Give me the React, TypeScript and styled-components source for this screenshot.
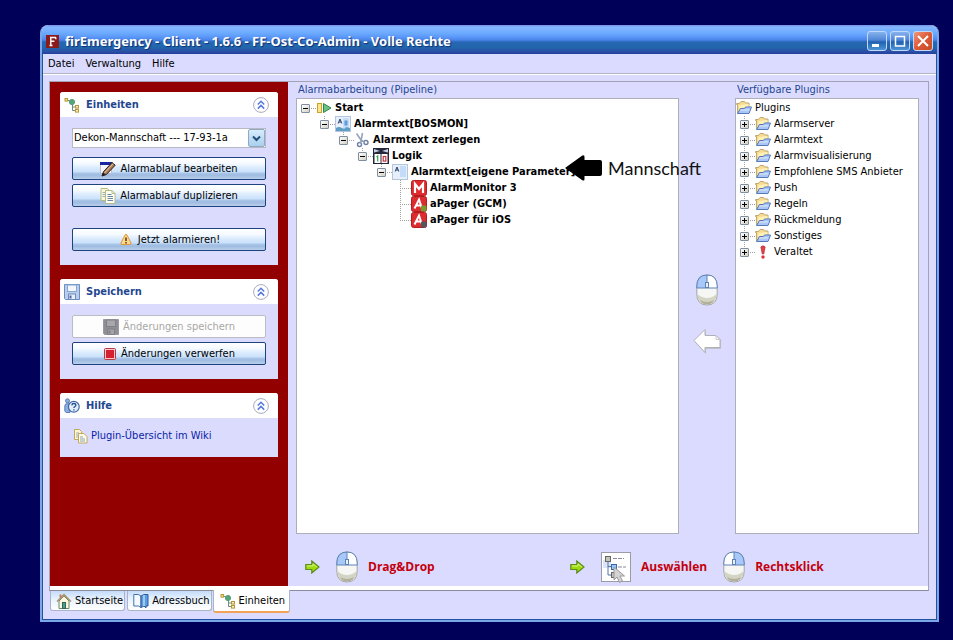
import React from "react";
import styled, { createGlobalStyle, css } from "styled-components";

const GlobalStyle = createGlobalStyle`
  *, *::before, *::after { box-sizing: border-box; }
  body { margin: 0; background: #000058; }
  body, button, select {
    font-family: "DejaVu Sans Condensed", "DejaVu Sans", sans-serif;
    font-size: 11px;
    line-height: 16px;
    color: #000;
  }
  svg { display: block; flex: none; }
`;

/* ---------- window frame ---------- */

const Desktop = styled.div`
  display: flex;
  min-height: 100vh;
  padding: 25px 14px 18px 40px;
`;

const Window = styled.div`
  flex: 1;
  display: flex;
  flex-direction: column;
  min-width: 0;
  border: 2px solid #7ba6e8;
  border-top: 0;
  border-radius: 8px 8px 0 0;
  background: #dbdbff;
`;

const TitleBar = styled.header`
  display: flex;
  align-items: center;
  gap: 6px;
  height: 29px;
  padding: 3px 4px 0 4px;
  border-radius: 7px 7px 0 0;
  background: linear-gradient(#6f8fe0 0, #86b6ff 2px, #6cabff 8px, #5a97f8 12px, #4a86ea 15px, #2766b4 17px, #2168ac 22px, #2a52a8 26px, #24409c 100%);
`;

const AppTitle = styled.h1`
  flex: 1;
  margin: 0;
  font: bold 13px/18px "Noto Sans", sans-serif;
  color: #fff;
  text-shadow: 1px 1px 1px #0c2f74;
  white-space: nowrap;
`;

const Caption = styled.div`
  display: flex;
  gap: 3px;
`;

const CaptionButton = styled.button<{ $close?: boolean }>`
  width: 20px;
  height: 20px;
  padding: 0;
  border: 1px solid #c3d8f8;
  border-radius: 3px;
  background: ${(p) =>
    p.$close
      ? "linear-gradient(135deg, #f0957a, #dc5a38 50%, #c84a26)"
      : "linear-gradient(#86b2ee, #4f86d4 45%, #2261b0 55%, #4a94d4)"};
`;

const Body = styled.div`
  flex: 1;
  display: flex;
  flex-direction: column;
  border: 1px solid #1f559f;
  border-top: 0;
`;

const MenuBar = styled.nav`
  display: flex;
  gap: 11px;
  padding: 2px 5px 1px;
  border-bottom: 1px solid #b4b4c4;
  box-shadow: 0 1px 0 #fff;
`;

const MenuItem = styled.button`
  padding: 0;
  border: 0;
  background: none;
`;

/* ---------- tab pane ---------- */

const Pane = styled.main`
  flex: 1;
  display: flex;
  margin: 7px 7px 0 6px;
  border: 1px solid #a3a3b4;
  border-bottom-color: #8c8c9c;
  box-shadow: inset 0 -4px 0 #fff;
  padding-bottom: 4px;
`;

const Sidebar = styled.aside`
  flex: 0 0 238px;
  display: flex;
  flex-direction: column;
  gap: 14px;
  padding: 10px;
  background: #920000;
`;

const CardBox = styled.section`
  border-radius: 3px 3px 0 0;
  background: #dbdbfe;
`;

const CardHead = styled.header`
  display: flex;
  align-items: center;
  gap: 6px;
  height: 25px;
  padding: 0 8px 0 4px;
  border-radius: 3px 3px 0 0;
  background: #fff;
`;

const CardTitle = styled.h2`
  flex: 1;
  margin: 0;
  font-size: 11px;
  color: #1f4790;
`;

const CollapseButton = styled.button`
  width: 18px;
  height: 18px;
  padding: 0;
  border: 0;
  background: none;
`;

const CardBody = styled.div<{ $compact?: boolean }>`
  display: flex;
  flex-direction: column;
  gap: 4px;
  padding: ${(p) => (p.$compact ? "10px 12px 13px" : "11px 12px 14px")};
`;

const SelectBox = styled.label`
  display: grid;
  grid-template-columns: 1fr 17px;
  align-items: center;
  height: 20px;
  margin-bottom: 5px;
  border: 1px solid #b9b9c4;
  background: #fff;
`;

const Select = styled.select`
  grid-area: 1 / 1 / 2 / 3;
  appearance: none;
  width: 100%;
  height: 18px;
  padding: 0 18px 0 1px;
  border: 0;
  background: none;
  line-height: 18px;
`;

const SelectArrow = styled.span`
  grid-area: 1 / 2;
  display: grid;
  place-items: center;
  height: 18px;
  border: 1px solid #8fa9c4;
  border-radius: 2px;
  background: linear-gradient(#d8ecfc, #a9cfee);
  pointer-events: none;
`;

const ActionButton = styled.button<{ $spaced?: boolean }>`
  display: flex;
  align-items: center;
  justify-content: center;
  gap: 4px;
  height: 23px;
  padding: 0;
  border: 1px solid #1d437e;
  border-radius: 2px;
  background: linear-gradient(#fff 0, #f6faff 25%, #d9eafd 48%, #cbe2fb 66%, #a9c6ea 72%, #9fbbe0 82%, #b9cfea 100%);
  ${(p) => p.$spaced && css`margin-top: 17px;`}
  &:disabled {
    border-color: #bcbcc4;
    background: #fdfdfe;
    color: #a8a8a4;
  }
`;

const WikiLink = styled.a`
  display: flex;
  align-items: center;
  gap: 3px;
  padding-left: 2px;
  color: #0a1ea8;
  text-decoration: none;
`;

/* ---------- editor ---------- */

const Editor = styled.div`
  flex: 1;
  display: flex;
  flex-direction: column;
  min-width: 0;
`;

const Columns = styled.div`
  flex: 1;
  display: flex;
  padding: 0 9px 0 8px;
`;

const Column = styled.section<{ $narrow?: boolean }>`
  flex: ${(p) => (p.$narrow ? "0 0 184px" : "1")};
  display: flex;
  flex-direction: column;
  min-width: 0;
`;

const ColumnTitle = styled.h2`
  margin: 0;
  padding-left: 2px;
  font-size: 11px;
  font-weight: normal;
  color: #1f4790;
`;

const TreeBox = styled.div`
  position: relative;
  flex: 1;
  border: 1px solid #aeaeb8;
  background: #fff;
`;

const TreeList = styled.ul`
  list-style: none;
  margin: 0;
  padding: 1px 0 0;
`;

const MoveColumn = styled.div`
  flex: 0 0 56px;
  display: flex;
  flex-direction: column;
  align-items: center;
  justify-content: center;
  gap: 22px;
  padding-top: 12px;
`;

const IconButton = styled.button`
  padding: 0;
  border: 0;
  background: none;
`;

const Row = styled.li<{ $level: number; $bold?: boolean }>`
  display: flex;
  align-items: center;
  height: 16px;
  padding-left: ${(p) => 4 + p.$level * 19}px;
  font-weight: ${(p) => (p.$bold ? "bold" : "normal")};
  white-space: nowrap;
`;

const RootRow = styled.li`
  display: flex;
  align-items: center;
  height: 16px;
  white-space: nowrap;
`;

const RowText = styled.span`
  padding-left: 3px;
`;

type Rail = "none" | "up" | "through";

const railHeight = { none: "0", up: "8px", through: "16px" };

const Joint = styled.span<{ $rail: Rail }>`
  flex: none;
  display: flex;
  align-items: center;
  width: 15px;
  height: 16px;
  background:
    repeating-linear-gradient(90deg, #a0a0a0 0 1px, transparent 1px 2px) 4px 8px / 11px 1px no-repeat,
    repeating-linear-gradient(#a0a0a0 0 1px, transparent 1px 2px) 4px 0 / 1px ${(p) => railHeight[p.$rail]} no-repeat;
`;

const Toggle = styled.button<{ $open?: boolean }>`
  width: 9px;
  height: 9px;
  padding: 0;
  border: 1px solid #7f8f9f;
  border-radius: 1px;
  background:
    linear-gradient(#000, #000) center / 5px 1px no-repeat,
    linear-gradient(#000, #000) center / 1px ${(p) => (p.$open ? "1px" : "5px")} no-repeat,
    linear-gradient(135deg, #fff, #d4d0c4);
`;

const Note = styled.div`
  position: absolute;
  left: 268px;
  top: 56px;
  display: flex;
  align-items: center;
  gap: 6px;
  font: 18px/26px Lato, sans-serif;
  color: #111;
`;

const Footer = styled.footer`
  display: flex;
  height: 52px;
  padding: 13px 17px 0;
`;

const Hint = styled.div<{ $first?: boolean }>`
  ${(p) => p.$first && css`flex: 0 0 265px;`}
  display: flex;
  align-items: center;
  gap: 16px;
  height: 40px;
`;

const HintStep = styled.div`
  display: flex;
  align-items: center;
  gap: 10px;
`;

const HintText = styled.span`
  font: bold 12px/16px "Open Sans", sans-serif;
  color: #c4000c;
`;

/* ---------- tabs ---------- */

const Tabs = styled.div`
  display: flex;
  align-items: flex-start;
  gap: 2px;
  height: 28px;
  padding-left: 7px;
`;

const Tab = styled.button<{ $active?: boolean }>`
  display: flex;
  align-items: center;
  gap: 3px;
  height: 20px;
  padding: 0 1px 0 5px;
  border: 1px solid #a9b4c8;
  border-top: 0;
  border-radius: 0 0 3px 3px;
  background: linear-gradient(#c3dbfb, #e6f1fd 40%, #fff);
  white-space: nowrap;
  ${(p) =>
    p.$active &&
    css`
      height: 23px;
      margin: -1px 0 0 -1px;
      padding: 0 4px 0 6px;
      border-bottom: 2px solid #f3a255;
      background: #fff;
    `}
`;

/* ---------- icons ---------- */

const FireLogo = () => (
  <svg width="13" height="13" viewBox="0 0 13 13">
    <rect width="13" height="13" fill="#8c1a1a" />
    <path d="M4 2.5h6M4.8 2.5v8M3.5 10.5h3M4.8 6.3h3.6M9.8 2.5v1.8" stroke="#fff" strokeWidth="1.4" fill="none" />
  </svg>
);

const UnitsIcon = () => (
  <svg width="16" height="16" viewBox="0 0 16 16" fill="none">
    <path d="M3 3.5h3M8.5 7v6.5h3M8.5 10h3" stroke="#6d8a8a" />
    <rect x="1" y="1.5" width="2.6" height="2.6" fill="#f6e08a" stroke="#b8963a" />
    <circle cx="8" cy="5" r="2.6" fill="#52a874" stroke="#5c9c80" />
    <rect x="11.5" y="8.5" width="3" height="2.6" fill="#fbf0b0" stroke="#b8963a" />
    <rect x="11.5" y="12.5" width="3" height="2.6" fill="#fbf0b0" stroke="#b8963a" />
  </svg>
);

const SaveIcon = ({ gray }: { gray?: boolean }) => (
  <svg width="16" height="16" viewBox="0 0 16 16">
    <path d="M.5.5h15v15h-14l-1-1z" fill={gray ? "#8e8e94" : "#b9cdec"} stroke={gray ? "#9a9aa0" : "#6d8cc0"} />
    <rect x="3.5" y="1" width="9" height="6.5" fill={gray ? "#a8a8ac" : "#f2f7fe"} stroke={gray ? "#808086" : "#8ba5d0"} />
    <rect x="4.5" y="10" width="7" height="5.5" fill={gray ? "#a2a2a8" : "#e9eff9"} stroke={gray ? "#808086" : "#6d8cc0"} />
    <rect x="5.5" y="11.5" width="2" height="3" fill={gray ? "#808086" : "#4b6aa4"} />
  </svg>
);

const HelpIcon = () => (
  <svg width="16" height="16" viewBox="0 0 16 16" fill="none">
    <circle cx="3.5" cy="2.8" r="2" fill="#8eaede" stroke="#5f80b8" />
    <path d="M.8 13V8q0-2.5 2.5-2.5L6 6v8.5H2z" fill="#8eaede" stroke="#5f80b8" />
    <circle cx="9.8" cy="8.8" r="5.4" fill="#e4effc" stroke="#4169a8" strokeWidth="1.2" />
    <path d="M7.8 7.4q.2-1.9 2.1-1.9t2 1.6q0 1-1.2 1.7-.8.5-.8 1.3M9.9 11.2v1.2" stroke="#24508f" strokeWidth="1.3" />
  </svg>
);

const CollapseIcon = () => (
  <svg width="18" height="18" viewBox="0 0 18 18" fill="none">
    <circle cx="9" cy="9" r="7.4" fill="#fff" stroke="#a9abc0" />
    <path d="M5.8 8.5 9 5.3l3.2 3.2M5.8 12.6 9 9.4l3.2 3.2" stroke="#5577dc" strokeWidth="1.5" />
  </svg>
);

const EditIcon = () => (
  <svg width="16" height="16" viewBox="0 0 16 16">
    <path d="M.5 1.500h11v11H.5z" fill="#f4f4fa" stroke="#b8bccc" />
    <rect y="1" width="12" height="3" fill="#1626a0" />
    <path d="M2 15l1.400-4.200L12 1.500l3.200 2.700-8.800 9.300z" fill="#a67c5c" stroke="#2c1e18" />
    <path d="M4.500 12l8.700-9.300" stroke="#e4c3a0" />
    <path d="M2 15l1.200-3.400 2.400 2z" fill="#222" />
  </svg>
);

const CopyIcon = () => (
  <svg width="16" height="16" viewBox="0 0 16 16">
    <path d="M1 .5h6.500l1.500 2v10H1z" fill="#fbf8d8" stroke="#b4bc84" />
    <path d="M2.500 4.500h3M2.500 6.500h3M2.500 8.500h3" stroke="#9ab0c4" />
    <path d="M5.500 2.500H12l3 3v10H5.500z" fill="#fffef2" stroke="#b4bc84" />
    <path d="M12 2.500v3h3" fill="none" stroke="#b4bc84" />
    <path d="M7.500 6.500h4M7.500 8.500h5.500M7.500 10.500h5.500M7.500 12.500h5.500" stroke="#6c86a4" />
  </svg>
);

const WikiIcon = () => (
  <svg width="14" height="16" viewBox="0 0 14 16">
    <path d="M.5 1.500h5l2 2v8h-7z" fill="#fff8d0" stroke="#c0a860" />
    <path d="M2 5h3M2 7h3M2 9h3" stroke="#9ab0c4" />
    <path d="M4.500 5.500h5.500l3 3v6.500h-8.500z" fill="#fffbe4" stroke="#c0a860" />
    <path d="M6 9h3M6 11h5M6 13h5" stroke="#8ea4ba" />
  </svg>
);

const WarnIcon = () => (
  <svg width="16" height="16" viewBox="0 0 16 16">
    <path d="M7 3q1-1.500 2 0l4 8q.5 1.500-1 1.500H4q-1.500 0-1-1.500z" fill="#fdd890" stroke="#e0983c" />
    <path d="M8 5.500v3.500M8 10v1.500" stroke="#5a3000" strokeWidth="1.500" />
  </svg>
);

const StopIcon = () => (
  <svg width="14" height="12" viewBox="0 0 14 12">
    <rect x="1.500" y=".5" width="11" height="11" rx="1" fill="#f8c8cc" stroke="#b83840" />
    <rect x="3" y="2" width="8" height="8" fill="#d42030" />
  </svg>
);

const StartIcon = () => (
  <svg width="16" height="16" viewBox="0 0 16 16">
    <rect x="1.500" y="3.500" width="4" height="9" fill="#fbe58a" stroke="#c9a227" />
    <path d="M7.500 3.500 15 8l-7.500 4.500z" fill="#6cc080" stroke="#2e8b4f" />
  </svg>
);

const TextIcon = ({ wave }: { wave?: boolean }) => (
  <svg width="16" height="16" viewBox="0 0 16 16">
    <rect x=".5" y=".5" width="15" height="15" fill="#e6effa" stroke="#b4c6de" />
    <path d="M8 2h6v11H8z" fill="#c5dcf8" />
    <path d="M3.200 7.500 5 3l1.800 4.500M3.800 6h2.500" fill="none" stroke="#2c4470" />
    {wave && <path d="M1 12q3-2 6 0t4-1l4 1v3H1z" fill="#5f9ec4" />}
    {wave && <path d="M9.500 4.500h3v5h-3z" fill="#5b9bd6" />}
  </svg>
);

const CutIcon = () => (
  <svg width="16" height="16" viewBox="0 0 16 16" fill="none">
    <path d="M2.500 1.500 8 9.500M8.500 1 7 9" stroke="#98a4ba" strokeWidth="1.600" />
    <circle cx="5.500" cy="12.500" r="2" stroke="#6f80a4" strokeWidth="1.400" />
    <circle cx="12" cy="10.500" r="2" stroke="#6f80a4" strokeWidth="1.400" />
    <path d="M6 11l1.500-2.500 3 1.500" stroke="#8e9cb4" strokeWidth="1.400" />
  </svg>
);

const LogicIcon = () => (
  <svg width="16" height="16" viewBox="0 0 16 16">
    <rect width="16" height="16" fill="#26263a" />
    <path d="M1 1l6 2-6 1.500zM15 1l-6 2 6 1.500z" fill="#c8d0e8" />
    <rect x="1.500" y="6" width="6" height="9" fill="#fff" />
    <rect x="8.500" y="6" width="6" height="9" fill="#fff" />
    <path d="M3.500 9l1.200-1v5.500" fill="none" stroke="#3aa04a" strokeWidth="1.200" />
    <rect x="10.200" y="8.500" width="2.600" height="4.600" fill="none" stroke="#c8303c" strokeWidth="1.200" />
  </svg>
);

const MonitorIcon = () => (
  <svg width="16" height="16" viewBox="0 0 16 16">
    <rect x=".5" y=".5" width="15" height="15" rx="2" fill="#e02a2e" stroke="#b41c20" />
    <path d="M4 13V4l4 5 4-5v9" fill="none" stroke="#fff" strokeWidth="2.200" />
  </svg>
);

const PagerIcon = ({ badge }: { badge: string }) => (
  <svg width="16" height="16" viewBox="0 0 16 16">
    <rect x=".5" y=".5" width="15" height="15" rx="2" fill="#dc2c30" stroke="#b41c20" />
    <path d="M3.500 12.500 8 3.500l3 9M5.500 9.500h5" fill="none" stroke="#fff" strokeWidth="2" />
    <rect x="10" y="9.500" width="5.500" height="6" rx="1" fill={badge} />
  </svg>
);

const FolderIcon = () => (
  <svg width="16" height="16" viewBox="0 0 16 16">
    <path d="M1.500 13V4.500H.5v-1h3l1.500-2h3.500l1 1.500H13v4" fill="#f8dc8c" stroke="#c0a878" />
    <path d="M3.500 5 12.500 4v4H3z" fill="#fff0b8" />
    <path d="M1.500 13.500l3-5h4l1-1.500h6l-2.500 6.500z" fill="#a9c6f6" stroke="#5478bc" />
    <path d="M4.500 10h9" stroke="#dceafe" />
  </svg>
);

const AlertIcon = () => (
  <svg width="16" height="16" viewBox="0 0 16 16">
    <path d="M5.800 3q2.200-2.500 4.400 0L8.800 10H7.200z" fill="#e04048" stroke="#b82c34" strokeWidth=".6" />
    <circle cx="8" cy="13" r="1.700" fill="#d8343c" />
  </svg>
);

const MouseIcon = ({ right }: { right?: boolean }) => (
  <svg width="22" height="32" viewBox="0 0 22 32">
    <path d="M.8 12Q1 1 11 1t10.200 11v8q0 11-10.200 11T.8 20z" fill="#f6f6f4" stroke="#a4a4a8" />
    <path d="M1.500 20q4 4 9.500 4t9.500-4q0 10.500-9.500 10.500T1.500 20z" fill="#d4d4c4" />
    <path d="M4 26q3 2 7 2t7-2q-2 4.500-7 4.500T4 26z" fill="#b0b09c" />
    <path d="M.8 14V12Q1 1 11 1v13z" fill={right ? "#fff" : "#a9c8fa"} />
    <path d="M21.200 14V12Q21 1 11 1v13z" fill={right ? "#a9c8fa" : "#fff"} />
    <path d="M.8 14V12Q1 1 11 1t10.200 11v2zM11 1v13" fill="none" stroke="#5c82b4" />
    <rect x="9.500" y="8.500" width="3" height="5" fill="#e8f0fc" stroke="#5c82b4" />
  </svg>
);

const BackIcon = () => (
  <svg width="28" height="26" viewBox="0 0 28 26">
    <path d="M2 14 13 3v5h11l4 4v9H13v5z" fill="#c0c0c8" />
    <path d="M1 12.500 12 1.500v6h11l4 4v8H12v5z" fill="#fff" stroke="#b0b0b8" />
    <path d="M23 7.500v4h4" fill="none" stroke="#c8c8cc" />
  </svg>
);

const GoIcon = () => (
  <svg width="15" height="14" viewBox="0 0 15 14">
    <path d="M.8 4.500h6V1l7.200 6-7.200 6V9.500h-6z" fill="#9edc10" stroke="#5c8a1c" strokeWidth="1.200" />
    <path d="M2 6h6V4l4 3" fill="none" stroke="#d4f47c" />
  </svg>
);

const PickIcon = () => (
  <svg width="30" height="32" viewBox="0 0 30 32">
    <rect x=".5" y="1.500" width="29" height="29" fill="#fff" stroke="#9c9ca8" />
    <rect x="2" y="9" width="8" height="8" fill="#dce4f8" />
    <path d="M7 10v14h4M7 15.500h4" fill="none" stroke="#5474a4" />
    <path d="M12 7.500h11M17 16h8" stroke="#8888a0" strokeDasharray="4 1" />
    <rect x="4.500" y="5.500" width="5" height="5" fill="#c4c4b8" stroke="#666" />
    <rect x="10.500" y="13.500" width="5" height="5" fill="#9cc4f4" stroke="#3c68a8" />
    <rect x="10.500" y="21.500" width="5" height="5" fill="#c4c4b8" stroke="#666" />
    <path d="M13 16v13l3-3 2.500 5.500 3-1.500-2.500-5h4.500z" fill="#d4d4d4" stroke="#999" />
  </svg>
);

const HomeIcon = () => (
  <svg width="16" height="16" viewBox="0 0 16 16">
    <path d="M3 8v7.500h10V8L8 3z" fill="#fdf6dc" stroke="#6b8a70" />
    <path d="M1 8.500 8 1.500l7 7" fill="none" stroke="#a89468" strokeWidth="1.500" />
    <rect x="6.500" y="9.500" width="3" height="6" fill="#4c9a8c" stroke="#2c6a60" />
    <path d="M3.500 1.500h2v3h-2z" fill="#c8785c" />
  </svg>
);

const BookIcon = () => (
  <svg width="16" height="16" viewBox="0 0 16 16">
    <path d="M.8 1.500h4.500L8 3v11.500L5.500 13H.8z" fill="#f4f9ff" stroke="#4472a8" />
    <path d="M8 3l3-1.500h4V13h-2v2l-2-2-3 1.500z" fill="#5a9ce0" stroke="#2c5c9c" />
    <path d="M11 2v11" stroke="#bcdcfa" strokeWidth="1.400" />
  </svg>
);

const NoteArrow = () => (
  <svg width="37" height="26" viewBox="0 0 37 26">
    <path d="M0 13 17 .8q2.500-1.300 2.500 1.200v3H35q2 0 2 2v12q0 2-2 2H19.500v3q0 2.500-2.500 1z" fill="#000" />
  </svg>
);

/* ---------- data ---------- */

const pipeline: { text: string; level: number; icon: React.ReactNode; rail: Rail; leaf?: boolean }[] = [
  { text: "Start", level: 0, icon: <StartIcon />, rail: "none" },
  { text: "Alarmtext[BOSMON]", level: 1, icon: <TextIcon wave />, rail: "up" },
  { text: "Alarmtext zerlegen", level: 2, icon: <CutIcon />, rail: "up" },
  { text: "Logik", level: 3, icon: <LogicIcon />, rail: "up" },
  { text: "Alarmtext[eigene Parameter]", level: 4, icon: <TextIcon />, rail: "up" },
  { text: "AlarmMonitor 3", level: 5, icon: <MonitorIcon />, rail: "through", leaf: true },
  { text: "aPager (GCM)", level: 5, icon: <PagerIcon badge="#7a9a2c" />, rail: "through", leaf: true },
  { text: "aPager für iOS", level: 5, icon: <PagerIcon badge="#55555c" />, rail: "up", leaf: true },
];

const plugins = [
  "Alarmserver",
  "Alarmtext",
  "Alarmvisualisierung",
  "Empfohlene SMS Anbieter",
  "Push",
  "Regeln",
  "Rückmeldung",
  "Sonstiges",
  "Veraltet",
];

type CardProps = { title: string; icon: React.ReactNode; compact?: boolean; children: React.ReactNode };

const Card = ({ title, icon, compact, children }: CardProps) => (
  <CardBox>
    <CardHead>
      {icon}
      <CardTitle>{title}</CardTitle>
      <CollapseButton aria-label={`${title} einklappen`}>
        <CollapseIcon />
      </CollapseButton>
    </CardHead>
    <CardBody $compact={compact}>{children}</CardBody>
  </CardBox>
);

export default function App() {
  return (
    <>
      <GlobalStyle />
      <Desktop>
        <Window>
          <TitleBar>
            <FireLogo />
            <AppTitle>firEmergency - Client - 1.6.6 - FF-Ost-Co-Admin - Volle Rechte</AppTitle>
            <Caption>
              <CaptionButton aria-label="Minimieren">
                <svg width="18" height="18" viewBox="0 0 18 18"><path d="M4 13.500h7" stroke="#fff" strokeWidth="3" /></svg>
              </CaptionButton>
              <CaptionButton aria-label="Maximieren">
                <svg width="18" height="18" viewBox="0 0 18 18"><path d="M4 4.500h10M4.500 4v10h9V4" fill="none" stroke="#fff" strokeWidth="1.500" /></svg>
              </CaptionButton>
              <CaptionButton $close aria-label="Schließen">
                <svg width="18" height="18" viewBox="0 0 18 18"><path d="M4 4l10 10M14 4 4 14" stroke="#fff" strokeWidth="2" /></svg>
              </CaptionButton>
            </Caption>
          </TitleBar>
          <Body>
            <MenuBar>
              <MenuItem>Datei</MenuItem>
              <MenuItem>Verwaltung</MenuItem>
              <MenuItem>Hilfe</MenuItem>
            </MenuBar>
            <Pane>
              <Sidebar>
                <Card title="Einheiten" icon={<UnitsIcon />}>
                  <SelectBox>
                    <Select aria-label="Einheit">
                      <option>Dekon-Mannschaft --- 17-93-1a</option>
                    </Select>
                    <SelectArrow>
                      <svg width="9" height="7" viewBox="0 0 9 7"><path d="M1 1.500l3.500 3.500L8 1.500" fill="none" stroke="#1f4f7c" strokeWidth="2" /></svg>
                    </SelectArrow>
                  </SelectBox>
                  <ActionButton><EditIcon />Alarmablauf bearbeiten</ActionButton>
                  <ActionButton><CopyIcon />Alarmablauf duplizieren</ActionButton>
                  <ActionButton $spaced><WarnIcon />Jetzt alarmieren!</ActionButton>
                </Card>
                <Card title="Speichern" icon={<SaveIcon />}>
                  <ActionButton disabled><SaveIcon gray />Änderungen speichern</ActionButton>
                  <ActionButton><StopIcon />Änderungen verwerfen</ActionButton>
                </Card>
                <Card title="Hilfe" icon={<HelpIcon />} compact>
                  <WikiLink href="#wiki"><WikiIcon />Plugin-Übersicht im Wiki</WikiLink>
                </Card>
              </Sidebar>
              <Editor>
                <Columns>
                  <Column>
                    <ColumnTitle>Alarmabarbeitung (Pipeline)</ColumnTitle>
                    <TreeBox>
                      <TreeList>
                        {pipeline.map((n) => (
                          <Row key={n.text} $level={n.level} $bold>
                            <Joint $rail={n.rail}>{!n.leaf && <Toggle $open aria-label={`${n.text} zuklappen`} />}</Joint>
                            {n.icon}
                            <RowText>{n.text}</RowText>
                          </Row>
                        ))}
                      </TreeList>
                      <Note>
                        <NoteArrow />
                        Mannschaft
                      </Note>
                    </TreeBox>
                  </Column>
                  <MoveColumn>
                    <MouseIcon />
                    <IconButton aria-label="Übernehmen"><BackIcon /></IconButton>
                  </MoveColumn>
                  <Column $narrow>
                    <ColumnTitle>Verfügbare Plugins</ColumnTitle>
                    <TreeBox>
                      <TreeList>
                        <RootRow>
                          <FolderIcon />
                          <RowText>Plugins</RowText>
                        </RootRow>
                        {plugins.map((name, i) => (
                          <Row key={name} $level={0}>
                            <Joint $rail={i === plugins.length - 1 ? "up" : "through"}>
                              <Toggle aria-label={`${name} aufklappen`} />
                            </Joint>
                            {name === "Veraltet" ? <AlertIcon /> : <FolderIcon />}
                            <RowText>{name}</RowText>
                          </Row>
                        ))}
                      </TreeList>
                    </TreeBox>
                  </Column>
                </Columns>
                <Footer>
                  <Hint $first>
                    <GoIcon />
                    <HintStep><MouseIcon /><HintText>Drag&amp;Drop</HintText></HintStep>
                  </Hint>
                  <Hint>
                    <GoIcon />
                    <HintStep><PickIcon /><HintText>Auswählen</HintText></HintStep>
                    <HintStep><MouseIcon right /><HintText>Rechtsklick</HintText></HintStep>
                  </Hint>
                </Footer>
              </Editor>
            </Pane>
            <Tabs>
              <Tab><HomeIcon />Startseite</Tab>
              <Tab><BookIcon />Adressbuch</Tab>
              <Tab $active><UnitsIcon />Einheiten</Tab>
            </Tabs>
          </Body>
        </Window>
      </Desktop>
    </>
  );
}
